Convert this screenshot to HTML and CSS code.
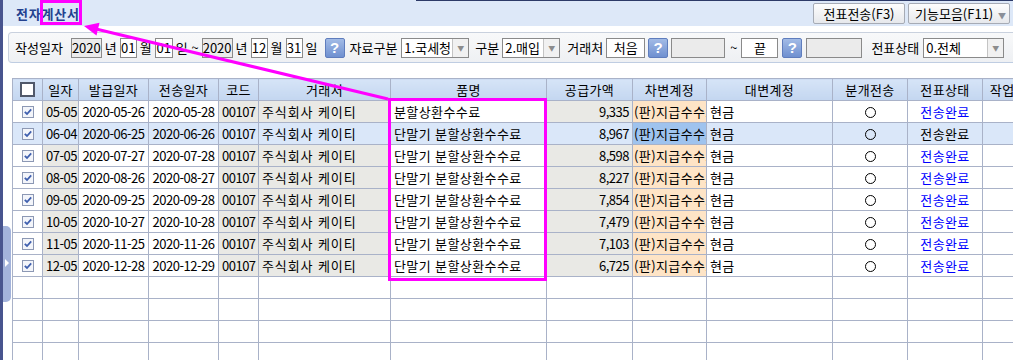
FILE: index.html
```html
<!DOCTYPE html>
<html lang="ko">
<head>
    <meta charset="UTF-8">
    <title>전자계산서</title>
    <link rel="stylesheet" href="styles.css">
</head>
<body>
    <div class="window">
        <div class="titlebar">
            <div class="title-area"><h1 class="title">전자계산서</h1></div>
            <div class="title-tools">
                <button class="tool-btn btn-send">전표전송(F3)</button>
                <button class="tool-btn btn-menu">기능모음(F11) <span class="caret">▼</span></button>
            </div>
        </div>

        <div class="filter-bar">
            <span class="lbl">작성일자</span>
            <span class="box gray w31 ml5">2020</span>
            <span class="lbl">년</span>
            <span class="box w17">01</span>
            <span class="lbl">월</span>
            <span class="box w18">01</span>
            <span class="lbl">일 ~</span>
            <span class="box gray w31">2020</span>
            <span class="lbl">년</span>
            <span class="box w17">12</span>
            <span class="lbl">월</span>
            <span class="box w17">31</span>
            <span class="lbl">일</span>
            <span class="help ml4">?</span>
            <span class="lbl ml2">자료구분</span>
            <span class="select w68 ml1"><span class="sel-text">1.국세청</span><span class="sel-arrow">▼</span></span>
            <span class="lbl ml3">구분</span>
            <span class="select w58"><span class="sel-text">2.매입</span><span class="sel-arrow">▼</span></span>
            <span class="lbl ml4">거래처</span>
            <span class="box w39 center">처음</span>
            <span class="help">?</span>
            <span class="box gray w54"></span>
            <span class="lbl ml2">~</span>
            <span class="box w37 center ml1">끝</span>
            <span class="help ml1">?</span>
            <span class="box gray w56 ml1"></span>
            <span class="lbl ml6">전표상태</span>
            <span class="select w81 ml1"><span class="sel-text">0.전체</span><span class="sel-arrow">▼</span></span>
        </div>

        <div class="grid-wrap">
            <table class="grid">
                <colgroup>
                    <col style="width:30px"><col style="width:36px"><col style="width:70px"><col style="width:70px">
                    <col style="width:40px"><col style="width:132px"><col style="width:156px"><col style="width:86px">
                    <col style="width:74px"><col style="width:126px"><col style="width:75px"><col style="width:75px">
                    <col style="width:64px">
                </colgroup>
                <thead>
                    <tr>
                        <th><span class="chk-all"></span></th>
                        <th>일자</th><th>발급일자</th><th>전송일자</th><th>코드</th><th>거래처</th>
                        <th>품명</th><th>공급가액</th><th>차변계정</th><th>대변계정</th>
                        <th>분개전송</th><th>전표상태</th><th>작업일자</th>
                    </tr>
                </thead>
                <tbody>
                    <tr>
                        <td class="c"><svg class="chk" viewBox="0 0 12 12"><rect x="0.5" y="0.5" width="11" height="11" fill="#f3f5fa" stroke="#8c98b4"/><path d="M2.8 5.8l2.2 2.2 4.2-4.6" fill="none" stroke="#3f5fae" stroke-width="1.8"/></svg></td>
                        <td class="gr num">05-05</td><td class="c num">2020-05-26</td><td class="c num">2020-05-28</td>
                        <td class="gr c num">00107</td><td class="gr co">주식회사 케이티</td><td class="item">분할상환수수료</td>
                        <td class="gr r num">9,335</td><td class="acct">(판)지급수수료</td><td class="cr">현금</td>
                        <td class="c"><span class="dot"></span></td><td class="c sent">전송완료</td><td></td>
                    </tr>
                    <tr class="selected">
                        <td class="c"><svg class="chk" viewBox="0 0 12 12"><rect x="0.5" y="0.5" width="11" height="11" fill="#f3f5fa" stroke="#8c98b4"/><path d="M2.8 5.8l2.2 2.2 4.2-4.6" fill="none" stroke="#3f5fae" stroke-width="1.8"/></svg></td>
                        <td class="gr num">06-04</td><td class="c num">2020-06-25</td><td class="c num">2020-06-26</td>
                        <td class="gr c num">00107</td><td class="gr co">주식회사 케이티</td><td class="item">단말기 분할상환수수료</td>
                        <td class="gr r num">8,967</td><td class="acct">(판)지급수수료</td><td class="cr">현금</td>
                        <td class="c"><span class="dot"></span></td><td class="c sent">전송완료</td><td></td>
                    </tr>
                    <tr>
                        <td class="c"><svg class="chk" viewBox="0 0 12 12"><rect x="0.5" y="0.5" width="11" height="11" fill="#f3f5fa" stroke="#8c98b4"/><path d="M2.8 5.8l2.2 2.2 4.2-4.6" fill="none" stroke="#3f5fae" stroke-width="1.8"/></svg></td>
                        <td class="gr num">07-05</td><td class="c num">2020-07-27</td><td class="c num">2020-07-28</td>
                        <td class="gr c num">00107</td><td class="gr co">주식회사 케이티</td><td class="item">단말기 분할상환수수료</td>
                        <td class="gr r num">8,598</td><td class="acct">(판)지급수수료</td><td class="cr">현금</td>
                        <td class="c"><span class="dot"></span></td><td class="c sent">전송완료</td><td></td>
                    </tr>
                    <tr>
                        <td class="c"><svg class="chk" viewBox="0 0 12 12"><rect x="0.5" y="0.5" width="11" height="11" fill="#f3f5fa" stroke="#8c98b4"/><path d="M2.8 5.8l2.2 2.2 4.2-4.6" fill="none" stroke="#3f5fae" stroke-width="1.8"/></svg></td>
                        <td class="gr num">08-05</td><td class="c num">2020-08-26</td><td class="c num">2020-08-27</td>
                        <td class="gr c num">00107</td><td class="gr co">주식회사 케이티</td><td class="item">단말기 분할상환수수료</td>
                        <td class="gr r num">8,227</td><td class="acct">(판)지급수수료</td><td class="cr">현금</td>
                        <td class="c"><span class="dot"></span></td><td class="c sent">전송완료</td><td></td>
                    </tr>
                    <tr>
                        <td class="c"><svg class="chk" viewBox="0 0 12 12"><rect x="0.5" y="0.5" width="11" height="11" fill="#f3f5fa" stroke="#8c98b4"/><path d="M2.8 5.8l2.2 2.2 4.2-4.6" fill="none" stroke="#3f5fae" stroke-width="1.8"/></svg></td>
                        <td class="gr num">09-05</td><td class="c num">2020-09-25</td><td class="c num">2020-09-28</td>
                        <td class="gr c num">00107</td><td class="gr co">주식회사 케이티</td><td class="item">단말기 분할상환수수료</td>
                        <td class="gr r num">7,854</td><td class="acct">(판)지급수수료</td><td class="cr">현금</td>
                        <td class="c"><span class="dot"></span></td><td class="c sent">전송완료</td><td></td>
                    </tr>
                    <tr>
                        <td class="c"><svg class="chk" viewBox="0 0 12 12"><rect x="0.5" y="0.5" width="11" height="11" fill="#f3f5fa" stroke="#8c98b4"/><path d="M2.8 5.8l2.2 2.2 4.2-4.6" fill="none" stroke="#3f5fae" stroke-width="1.8"/></svg></td>
                        <td class="gr num">10-05</td><td class="c num">2020-10-27</td><td class="c num">2020-10-28</td>
                        <td class="gr c num">00107</td><td class="gr co">주식회사 케이티</td><td class="item">단말기 분할상환수수료</td>
                        <td class="gr r num">7,479</td><td class="acct">(판)지급수수료</td><td class="cr">현금</td>
                        <td class="c"><span class="dot"></span></td><td class="c sent">전송완료</td><td></td>
                    </tr>
                    <tr>
                        <td class="c"><svg class="chk" viewBox="0 0 12 12"><rect x="0.5" y="0.5" width="11" height="11" fill="#f3f5fa" stroke="#8c98b4"/><path d="M2.8 5.8l2.2 2.2 4.2-4.6" fill="none" stroke="#3f5fae" stroke-width="1.8"/></svg></td>
                        <td class="gr num">11-05</td><td class="c num">2020-11-25</td><td class="c num">2020-11-26</td>
                        <td class="gr c num">00107</td><td class="gr co">주식회사 케이티</td><td class="item">단말기 분할상환수수료</td>
                        <td class="gr r num">7,103</td><td class="acct">(판)지급수수료</td><td class="cr">현금</td>
                        <td class="c"><span class="dot"></span></td><td class="c sent">전송완료</td><td></td>
                    </tr>
                    <tr>
                        <td class="c"><svg class="chk" viewBox="0 0 12 12"><rect x="0.5" y="0.5" width="11" height="11" fill="#f3f5fa" stroke="#8c98b4"/><path d="M2.8 5.8l2.2 2.2 4.2-4.6" fill="none" stroke="#3f5fae" stroke-width="1.8"/></svg></td>
                        <td class="gr num">12-05</td><td class="c num">2020-12-28</td><td class="c num">2020-12-29</td>
                        <td class="gr c num">00107</td><td class="gr co">주식회사 케이티</td><td class="item">단말기 분할상환수수료</td>
                        <td class="gr r num">6,725</td><td class="acct">(판)지급수수료</td><td class="cr">현금</td>
                        <td class="c"><span class="dot"></span></td><td class="c sent">전송완료</td><td></td>
                    </tr>
                    <tr class="empty"><td></td><td></td><td></td><td></td><td></td><td></td><td></td><td></td><td></td><td></td><td></td><td></td><td></td></tr>
                    <tr class="empty"><td></td><td></td><td></td><td></td><td></td><td></td><td></td><td></td><td></td><td></td><td></td><td></td><td></td></tr>
                    <tr class="empty"><td></td><td></td><td></td><td></td><td></td><td></td><td></td><td></td><td></td><td></td><td></td><td></td><td></td></tr>
                    <tr class="empty"><td></td><td></td><td></td><td></td><td></td><td></td><td></td><td></td><td></td><td></td><td></td><td></td><td></td></tr>
                </tbody>
            </table>
        </div>

        <!-- side panel handle -->
        <div class="side-handle"><span class="handle-arrow"></span></div>

        <!-- annotation overlay -->
        <svg class="annot" width="1013" height="360" viewBox="0 0 1013 360">
            <rect x="41.5" y="1.5" width="39" height="22" fill="none" stroke="#ff00ff" stroke-width="3"/>
            <rect x="389.5" y="99.5" width="156" height="180" fill="none" stroke="#ff00ff" stroke-width="3"/>
            <line x1="388" y1="99" x2="96" y2="29" stroke="#ff00ff" stroke-width="3"/>
            <polygon points="84,26 99.5,22.8 96.5,35.4" fill="#ff00ff"/>
        </svg>
    </div>
</body>
</html>
```

FILE: styles.css
```css
body {
    margin: 0;
    width: 1013px;
    height: 360px;
    overflow: hidden;
    background-color: #fff;
    font-family: "Noto Sans CJK KR", "Noto Sans", sans-serif;
    font-size: 13px;
    color: #000;
}
.window {
    position: relative;
    height: 360px;
    border-left: 3px solid #48548e;
    overflow: hidden;
}
.titlebar {
    display: flex;
    height: 26px;
    background-color: #dde8f8;
}
.title-area {
    width: 400px;
    padding-left: 13px;
}
.title {
    margin: 0;
    font-size: 13px;
    font-weight: bold;
    line-height: 27px;
    color: #23418f;
    letter-spacing: 0.8px;
}
.title-tools {
    flex: 1;
    display: flex;
    justify-content: flex-end;
    align-items: center;
    gap: 3px;
    padding-right: 3px;
    border-top: 1px solid #2c3a68;
}
.tool-btn {
    height: 21px;
    padding: 0;
    border: 1px solid #a6abb5;
    border-radius: 2px;
    background: linear-gradient(#fdfdfd, #e6e8ec);
    font-family: inherit;
    font-size: 13px;
    color: #000;
}
.btn-send { width: 92px; }
.btn-menu { width: 102px; text-align: left; padding-left: 6px; }
.caret {
    font-size: 8px;
    color: #8a8f98;
    margin-left: 1px;
}
.filter-bar {
    display: flex;
    align-items: center;
    gap: 3px;
    height: 29px;
    margin: 6px -10px 0 5px;
    padding-left: 6px;
    border: 1px solid #c9d1de;
    border-bottom-color: #bfcde2;
    border-radius: 4px;
    background: linear-gradient(#f8f9fa, #eef0f3);
}
.lbl {
    white-space: nowrap;
    line-height: 20px;
}
.box {
    height: 18px;
    line-height: 18px;
    border: 1px solid #8a8a8a;
    background-color: #fff;
    text-align: center;
    box-sizing: content-box;
}
.box.gray { background-color: #ebebeb; }
.w17 { width: 15px; }
.w18 { width: 16px; }
.w31 { width: 29px; }
.w37 { width: 35px; }
.w39 { width: 37px; }
.w54 { width: 52px; }
.w56 { width: 54px; }
.w58 { width: 58px; }
.w68 { width: 68px; }
.w81 { width: 81px; }
.ml1 { margin-left: 1px; }
.ml2 { margin-left: 2px; }
.ml3 { margin-left: 3px; }
.ml4 { margin-left: 4px; }
.ml5 { margin-left: 5px; }
.ml6 { margin-left: 6px; }
.help {
    width: 18px;
    height: 18px;
    border: 1px solid #5f7dbd;
    border-radius: 2px;
    background: linear-gradient(#a2bbe6, #6f90d0);
    color: #fff;
    font-family: "Liberation Sans", sans-serif;
    font-weight: bold;
    font-size: 15px;
    line-height: 18px;
    text-align: center;
}
.select {
    display: flex;
    height: 20px;
    box-sizing: border-box;
    border: 1px solid #8a8a8a;
    background-color: #fff;
}
.sel-text {
    flex: 1;
    padding-left: 2px;
    line-height: 17px;
    white-space: nowrap;
}
.sel-arrow {
    width: 15px;
    border-left: 1px solid #c4c4c4;
    background-color: #f1f1f1;
    color: #8c8c8c;
    font-size: 7px;
    line-height: 18px;
    text-align: center;
}
.grid-wrap {
    margin: 15px 0 0 9px;
    overflow: hidden;
}
.grid {
    table-layout: fixed;
    border-collapse: collapse;
    width: 1034px;
}
.grid th,
.grid td {
    height: 22px;
    padding: 0 3px;
    border: 1px solid #a9b2c8;
    white-space: nowrap;
    overflow: hidden;
    line-height: 20px;
    box-sizing: border-box;
    letter-spacing: 0.4px;
}
.grid th {
    font-weight: normal;
    text-align: center;
    background: linear-gradient(#d6e4f7, #c3d6f0);
}
.grid td.c { text-align: center; }
.grid td.r { text-align: right; }
.grid td.gr { background-color: #e9e9e5; }
.grid td.num { letter-spacing: -0.5px; }
.grid td.co { letter-spacing: 0.9px; }
.grid td.acct {
    padding: 0 0 0 1px;
    background-color: #fee4c6;
    text-overflow: clip;
}
.grid td.sent { color: #0000ff; }
.grid .selected td { background-color: #dae7f9; }
.grid .selected td.acct { background-color: #9fc3ee; }
.grid .selected td.sent { color: #000; }
.chk {
    display: block;
    width: 12px;
    height: 12px;
    margin: 0 auto;
}
.chk-all {
    display: block;
    width: 11px;
    height: 11px;
    margin: 0 auto;
    border: 2px solid #50586a;
    background-color: #fff;
}
.dot {
    display: inline-block;
    width: 9px;
    height: 9px;
    border: 1px solid #000;
    border-radius: 50%;
    vertical-align: middle;
}
.side-handle {
    position: absolute;
    left: 0;
    top: 226px;
    width: 8px;
    height: 76px;
    border-radius: 0 5px 5px 0;
    background-color: #a3b3db;
}
.handle-arrow {
    position: absolute;
    left: 2px;
    top: 33px;
    border-left: 4px solid #fff;
    border-top: 4px solid transparent;
    border-bottom: 4px solid transparent;
}
.annot {
    position: absolute;
    left: -3px;
    top: 0;
    pointer-events: none;
}
```
